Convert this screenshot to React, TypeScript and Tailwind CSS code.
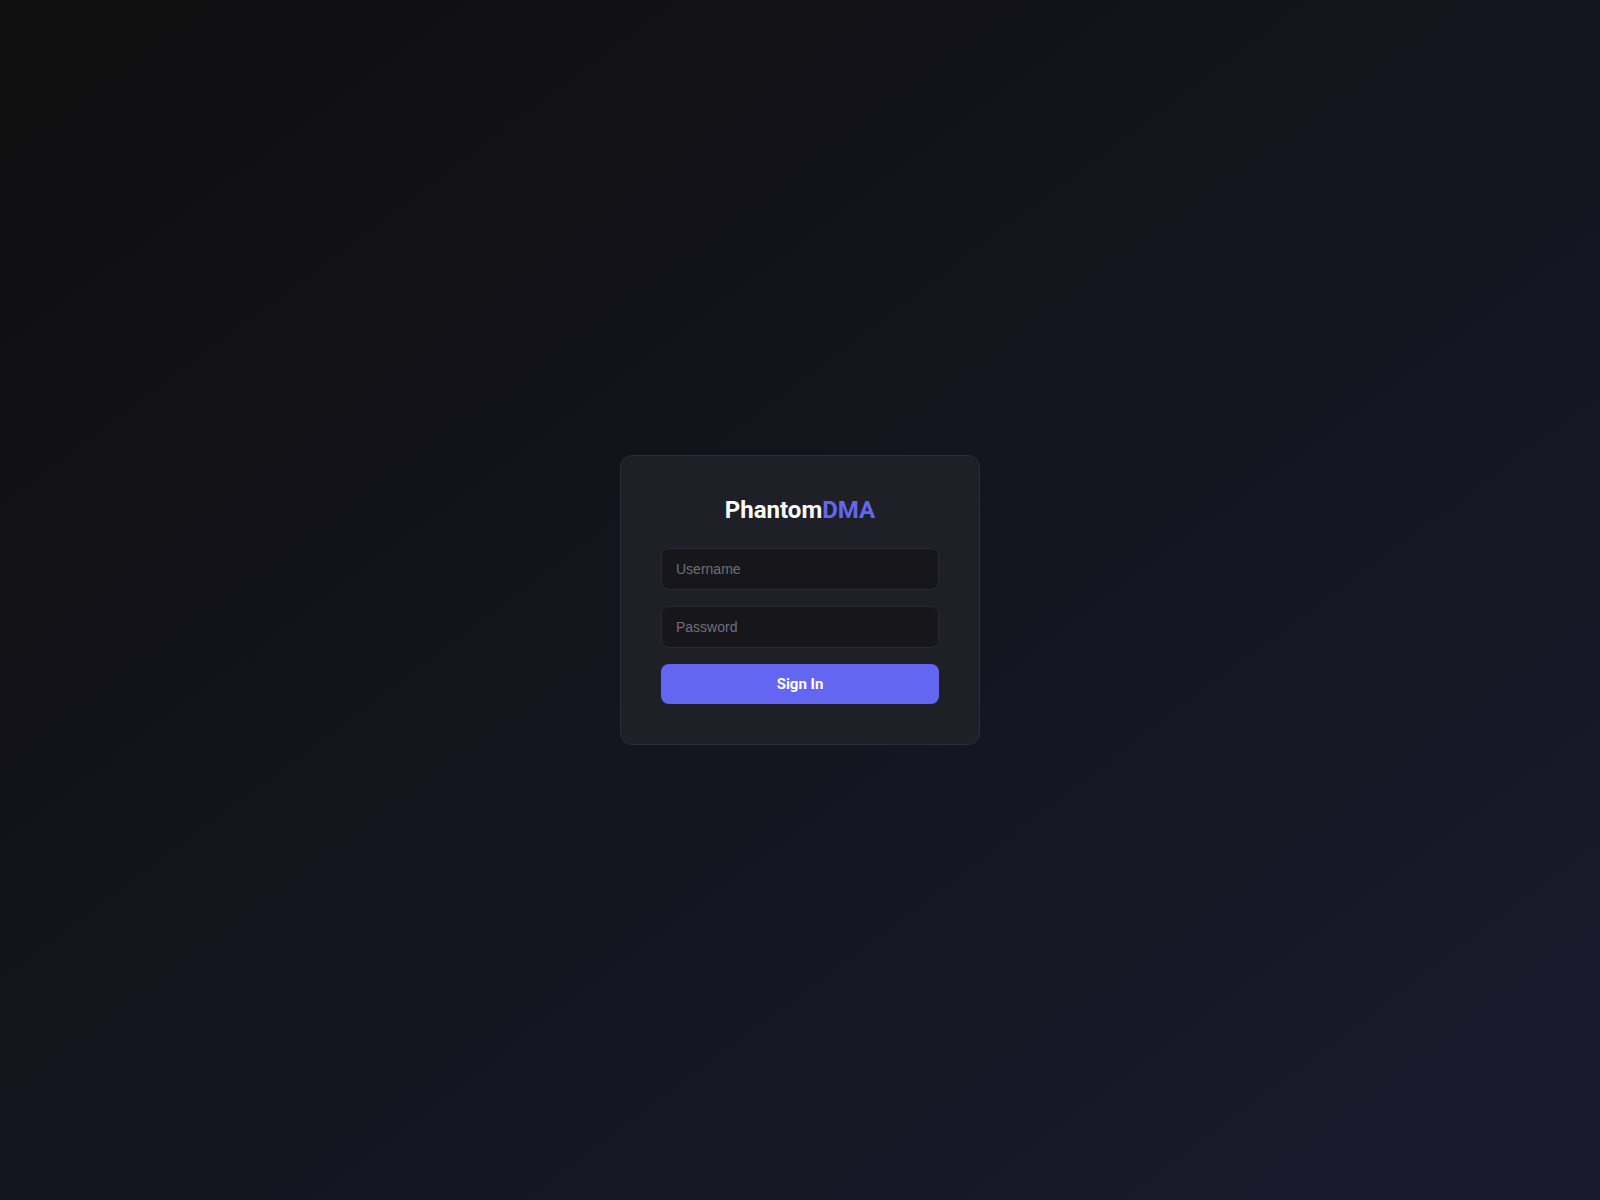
export default function App() {
  return (
    <div className="flex h-screen w-full items-center justify-center bg-linear-to-br from-[#0f0f0f] to-[#1a1a2e] font-['Roboto',sans-serif]">
      <div className="w-[360px] rounded-xl border border-[#2d2d37] bg-[#1f1f28] p-10">
        <h1 className="mb-6 text-center text-2xl leading-[28px] font-bold text-white">
          Phantom<span className="text-[#6366f1]">DMA</span>
        </h1>
        <form className="flex flex-col gap-4" onSubmit={(e) => e.preventDefault()}>
          <input
            type="text"
            placeholder="Username"
            className="block h-[42px] w-full rounded-lg border border-[#2a2a32] bg-[#16161b] px-3.5 font-['Liberation_Sans',Arial,sans-serif] text-sm text-white outline-none placeholder:text-[#707077]"
          />
          <input
            type="password"
            placeholder="Password"
            className="block h-[42px] w-full rounded-lg border border-[#2a2a32] bg-[#16161b] px-3.5 font-['Liberation_Sans',Arial,sans-serif] text-sm text-white outline-none placeholder:text-[#707077]"
          />
          <button
            type="submit"
            className="h-10 w-full rounded-lg bg-[#6366f1] text-[15px] font-bold text-white"
          >
            Sign In
          </button>
        </form>
      </div>
    </div>
  );
}
